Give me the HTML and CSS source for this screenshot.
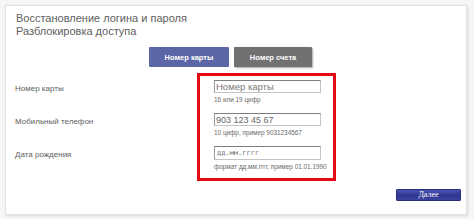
FILE: index.html
```html
<!DOCTYPE html>
<html lang="ru">
<head>
<meta charset="utf-8">
<title>Восстановление логина и пароля</title>
<link rel="stylesheet" href="styles.css">
</head>
<body>
<div class="card">
  <div class="title">Восстановление логина и пароля<br>Разблокировка доступа</div>
  <div class="tabs">
    <div class="tab tab-active">Номер карты</div>
    <div class="tab tab-other">Номер счета</div>
  </div>
  <div class="form">
    <div class="labels">
      <div class="label">Номер карты</div>
      <div class="label">Мобильный телефон</div>
      <div class="label">Дата рождения</div>
    </div>
    <div class="highlight">
      <div class="field">
        <input class="input" type="text" placeholder="Номер карты">
        <div class="hint">16 или 19 цифр</div>
      </div>
      <div class="field">
        <input class="input input-filled" type="text" value="903 123 45 67">
        <div class="hint">10 цифр, пример 9031234567</div>
      </div>
      <div class="field">
        <input class="input input-date" type="text" placeholder="дд.мм.гггг">
        <div class="hint">формат дд.мм.гггг, пример 01.01.1990</div>
      </div>
    </div>
  </div>
  <div class="actions">
    <button class="next">Далее</button>
  </div>
</div>
</body>
</html>
```
FILE: styles.css
```css
html, body {
  margin: 0;
  padding: 0;
}
body {
  background: #f6f6f6;
  width: 474px;
  height: 219px;
  overflow: hidden;
  font-family: "Liberation Sans", Arial, sans-serif;
}
.card {
  box-sizing: border-box;
  margin: 5px 0 0 5px;
  width: 462px;
  background: #fff;
  border: 1px solid #e2e2e2;
  box-shadow: 1px 1px 3px rgba(0, 0, 0, 0.12);
  padding: 6px 5px 13px 8px;
}
.title {
  padding-left: 2px;
  font-size: 11px;
  line-height: 12.5px;
  color: #606060;
}
.tabs {
  display: flex;
  gap: 5px;
  margin-top: 10px;
  padding-left: 135px;
}
.tab {
  height: 20px;
  display: flex;
  align-items: center;
  justify-content: center;
  color: #fff;
  font-size: 7.5px;
  font-weight: bold;
  border-radius: 1px;
}
.tab-active {
  width: 80px;
  background: #5c66a6;
}
.tab-other {
  width: 78px;
  background: #717171;
  box-shadow: 1px 1px 2px rgba(0, 0, 0, 0.35);
}
.form {
  display: flex;
  margin-top: 6px;
}
.labels {
  width: 183px;
  padding-top: 11px;
  display: flex;
  flex-direction: column;
  gap: 23px;
}
.label {
  font-size: 8px;
  line-height: 10px;
  color: #606060;
  padding-left: 1px;
}
.highlight {
  box-sizing: border-box;
  width: 139px;
  border: 3px solid #e50914;
  padding: 4px 0 7px 14px;
  display: flex;
  flex-direction: column;
  gap: 9px;
}
.field {
  display: flex;
  flex-direction: column;
  gap: 3px;
}
.input {
  box-sizing: border-box;
  width: 107px;
  height: 13px;
  margin: 0;
  padding: 0 1px;
  border: 1px solid #c4c4c4;
  border-top-color: #7f7f7f;
  border-left-color: #9a9a9a;
  font-family: "Liberation Sans", Arial, sans-serif;
  font-size: 9.5px;
  font-weight: normal;
  color: #4a4a4a;
  background: #fff;
  outline: none;
}
.input::placeholder {
  color: #7a7a7a;
}
.input-filled {
  color: #666;
  font-size: 9px;
}
.input-date {
  height: 14px;
  font-family: "DejaVu Sans Mono", monospace;
  font-size: 7px;
  padding-left: 2px;
}
.input-date::placeholder {
  color: #777;
}
.hint {
  font-size: 6.4px;
  line-height: 8px;
  color: #6a6a6a;
}
.actions {
  display: flex;
  justify-content: flex-end;
  margin-top: 8px;
}
.next {
  width: 65px;
  height: 12px;
  margin: 0;
  padding: 0;
  border: 1px solid #2a2f7a;
  border-radius: 1px;
  background: linear-gradient(#4a52b4, #2f358f 55%, #3a41a0);
  color: #fff;
  font-family: "Liberation Serif", "Times New Roman", serif;
  font-size: 8px;
  line-height: 10px;
}
```
